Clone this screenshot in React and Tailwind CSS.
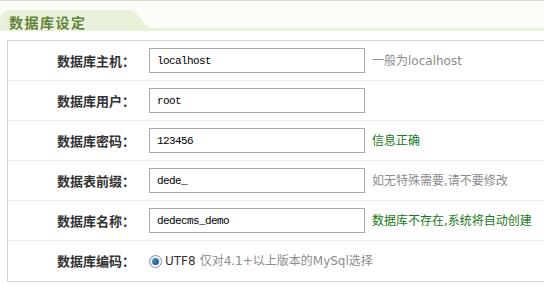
import React from 'react';

const rows = [
  { label: '数据库主机：', value: 'localhost', hint: '一般为localhost', tone: 'gray' },
  { label: '数据库用户：', value: 'root' },
  { label: '数据库密码：', value: '123456', hint: '信息正确', tone: 'green' },
  { label: '数据表前缀：', value: 'dede_', hint: '如无特殊需要,请不要修改', tone: 'gray' },
  { label: '数据库名称：', value: 'dedecms_demo', hint: '数据库不存在,系统将自动创建', tone: 'green' },
];

const cjk = { fontFamily: '"Noto Sans CJK SC", sans-serif' };
const hintFont = { fontFamily: '"DejaVu Sans", "Noto Sans CJK SC", sans-serif' };

export default function App() {
  return (
    <div className="w-[544px] h-[287px] bg-white overflow-hidden" style={cjk}>
      {/* Section header */}
      <div className="border-t border-[#d6ddcd] bg-[#fcfdf8]">
        <div className="flex items-end h-[30px]">
          <div className="h-[21px] w-[130px] flex-none rounded-tl-[10px] bg-[#e8f1da] pl-[9px] pt-[3px] text-[14px] leading-[18px] font-bold tracking-[1.5px] text-[#62833a]">
            数据库设定
          </div>
          <svg width="24" height="21" className="flex-none block" viewBox="0 0 24 21">
            <path d="M0 0 C10 0 11 18 24 18 L24 21 L0 21 Z" fill="#e8f1da" />
          </svg>
          <div className="flex-1 h-[3px] bg-[#e8f1da]" />
        </div>
      </div>

      {/* Form box */}
      <div className="mt-[9px] ml-[7px] border-l border-t border-b border-[#d3d3d3]">
        {rows.map(r => (
          <div key={r.label} className="h-[40px] border-b border-[#efefef] flex items-center">
            <div className="w-[127px] flex-none text-right text-[13px] font-bold text-[#333]">{r.label}</div>
            <input
              readOnly
              value={r.value}
              className="ml-[14px] w-[216px] h-[25px] flex-none border border-[#a8a8a8] px-[7px] text-[11px] tracking-[-0.6px] text-black outline-none"
              style={{ fontFamily: '"Liberation Mono", monospace' }}
            />
            {r.hint && (
              <span
                className={`ml-[7px] text-[12px] whitespace-nowrap ${r.tone === 'green' ? 'text-[#187818]' : 'text-[#8c8c8c]'}`}
                style={hintFont}
              >
                {r.hint}
              </span>
            )}
          </div>
        ))}
        <div className="h-[40px] flex items-center">
          <div className="w-[127px] flex-none text-right text-[13px] font-bold text-[#333]">数据库编码：</div>
          <div className="ml-[14px] flex items-center text-[12px] whitespace-nowrap" style={hintFont}>
            <span className="w-[13px] h-[13px] rounded-full border border-[#7f93a5] bg-gradient-to-br from-[#e4e8ec] to-white flex items-center justify-center">
              <span className="w-[7px] h-[7px] rounded-full bg-gradient-to-br from-[#4f9ad8] to-[#1d4f86]" />
            </span>
            <span className="ml-[3px] text-[#333]">UTF8</span>
            <span className="ml-[4px] text-[#8c8c8c]">仅对4.1+以上版本的MySql选择</span>
          </div>
        </div>
      </div>
    </div>
  );
}
